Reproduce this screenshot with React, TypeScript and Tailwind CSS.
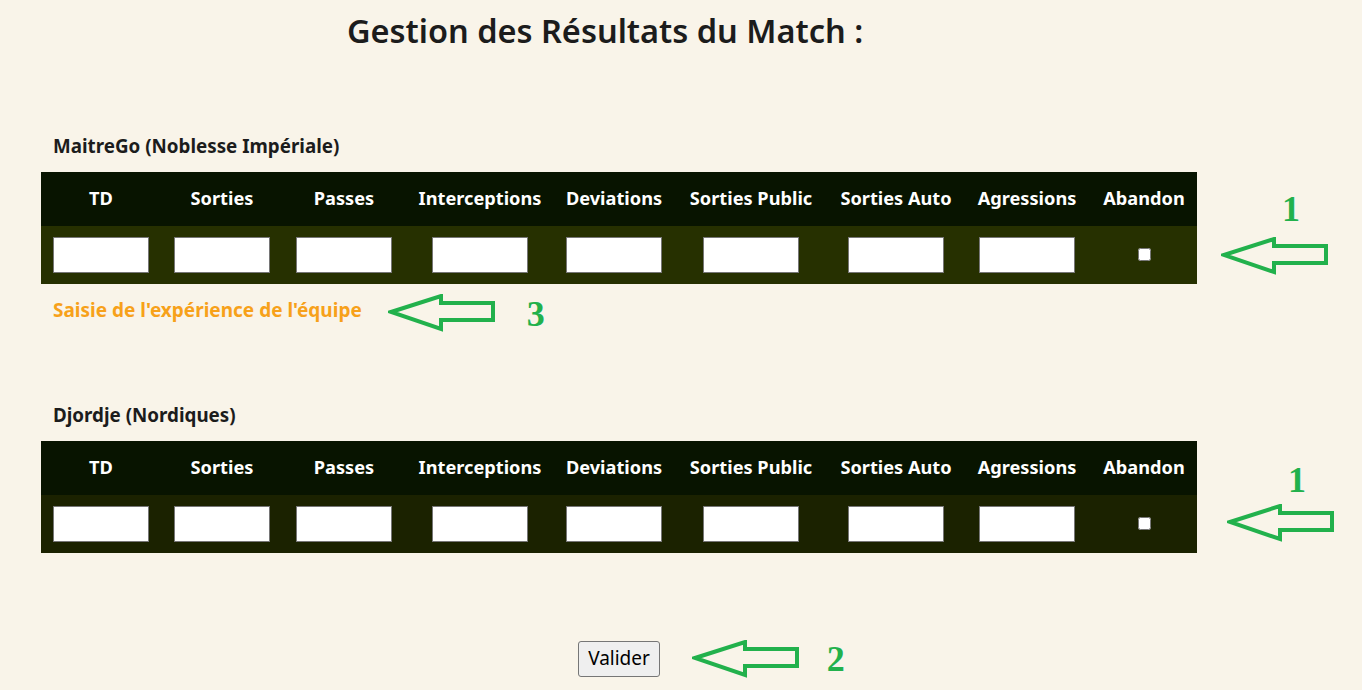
import type { ReactNode } from "react";

const font = { fontFamily: '"Noto Sans", "Open Sans", Arial, sans-serif' };
const serif = { fontFamily: '"Liberation Serif", "Times New Roman", serif' };

const columns = [
  { label: "TD", w: "w-[120px]" },
  { label: "Sorties", w: "w-[122px]" },
  { label: "Passes", w: "w-[122px]" },
  { label: "Interceptions", w: "w-[150px]" },
  { label: "Deviations", w: "w-[118px]" },
  { label: "Sorties Public", w: "w-[156px]" },
  { label: "Sorties Auto", w: "w-[134px]" },
  { label: "Agressions", w: "w-[128px]" },
  { label: "Abandon", w: "w-[106px]" },
];

function Arrow({ className = "" }: { className?: string }) {
  return (
    <svg className={"shrink-0 " + className} width="108" height="38" viewBox="0 0 108 38" fill="none">
      <polygon points="3,18 53,2 53,9 105,9 105,26 53,26 53,35" stroke="#22b14c" strokeWidth="4" />
    </svg>
  );
}

function Num({ children, className = "" }: { children: ReactNode; className?: string }) {
  return (
    <span className={"block text-[36px] font-bold leading-none text-[#22b14c] " + className} style={serif}>
      {children}
    </span>
  );
}

function TeamTable({
  team,
  rowBg,
  noteClass,
  arrowClass,
}: {
  team: string;
  rowBg: string;
  noteClass: string;
  arrowClass: string;
}) {
  return (
    <div>
      <h2 className="pl-3 text-[18.8px] font-bold leading-none text-[#1c1c1c]">{team}</h2>
      <div className="mt-[16px] flex items-start">
        <div className="w-[1156px] shrink-0">
          <div className="flex h-[54px] bg-[#081400]">
            {columns.map((c) => (
              <div key={c.label} className={`${c.w} flex items-center justify-center text-[18.2px] font-bold text-white`}>
                {c.label}
              </div>
            ))}
          </div>
          <div className={`flex h-[58px] ${rowBg}`}>
            {columns.map((c) => (
              <div key={c.label} className={`${c.w} flex items-center justify-center`}>
                {c.label === "Abandon" ? (
                  <input type="checkbox" className="h-[13px] w-[13px]" />
                ) : (
                  <input type="text" className="h-[36px] w-[96px] border border-[#767676] bg-white" />
                )}
              </div>
            ))}
          </div>
        </div>
        <div className={"flex flex-col " + noteClass}>
          <Num className="pl-[61px]">1</Num>
          <Arrow className={arrowClass} />
        </div>
      </div>
    </div>
  );
}

export default function App() {
  return (
    <div className="min-h-[690px] w-full overflow-hidden bg-[#f9f4e9] px-[41px] pt-[8px]" style={font}>
      <h1 className="w-[1156px] pr-[28px] text-center text-[32.5px] font-semibold leading-[46px] text-[#1c1c1c]">
        Gestion des Résultats du Match :
      </h1>

      <div className="mt-[83px]">
        <TeamTable
          team="MaitreGo (Noblesse Impériale)"
          rowBg="bg-[#263000]"
          noteClass="ml-[24px] mt-[19px]"
          arrowClass="mt-[10px]"
        />
        <div className="mt-[9px] flex items-start pl-3">
          <span className="mt-[8px] text-[19px] font-bold leading-none text-[#f7a11a]">
            Saisie de l'expérience de l'équipe
          </span>
          <Arrow className="ml-[26px] mt-[1px]" />
          <Num className="ml-[31px] mt-[3px]">3</Num>
        </div>
      </div>

      <div className="mt-[74px]">
        <TeamTable
          team="Djordje (Nordiques)"
          rowBg="bg-[#1b2200]"
          noteClass="ml-[30px] mt-[21px]"
          arrowClass="mt-[6px]"
        />
      </div>

      <div className="mt-[87px] grid w-[1156px] grid-cols-[1fr_auto_1fr] items-center">
        <div />
        <button className="h-[36px] rounded-[3px] border border-[#767676] bg-[#efefef] px-[9px] text-[19px] text-black">
          Valider
        </button>
        <div className="flex items-center">
          <Arrow className="ml-[32px]" />
          <Num className="ml-[27px]">2</Num>
        </div>
      </div>
    </div>
  );
}
